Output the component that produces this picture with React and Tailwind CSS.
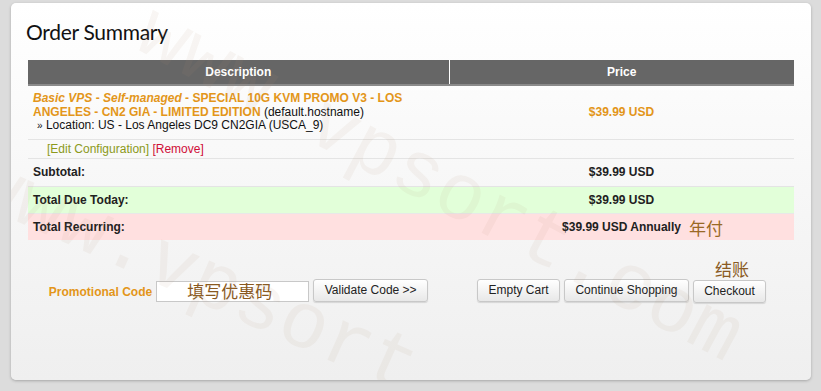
import React from 'react';

const Btn = ({ children, className = '' }) => (
    <button className={`h-[23px] px-[10px] text-[12px] text-[#222] border border-[#c8c8c8] rounded-[3px] bg-gradient-to-b from-white to-[#e8e8e8] shadow-[0_1px_1px_rgba(0,0,0,0.12)] ${className}`}>
        {children}
    </button>
);

const App = () => {
    return (
        <div className="w-[821px] h-[391px] bg-[#dcdcdc] pt-[3px] pl-[11px] overflow-hidden" style={{ fontFamily: '"Liberation Sans", Arial, sans-serif' }}>
            <div className="relative w-[800px] h-[377px] rounded-[5px] bg-gradient-to-b from-white to-[#efefef] shadow-[0_1px_3px_rgba(0,0,0,0.25)] overflow-hidden">
                <div className="pt-[15px] pl-[15px] pr-[17px]">
                    <h1 className="text-[21px] leading-[28px] text-[#111] tracking-[-0.3px]" style={{ fontFamily: 'Lato, "Open Sans", sans-serif' }}>
                        Order Summary
                    </h1>

                    <table className="mt-[14px] ml-[2px] w-[766px] border-collapse text-[12px] text-[#111]">
                        <thead>
                            <tr className="bg-[#666666] text-white h-[25px] border-b-2 border-[#8a8a8a]">
                                <th className="w-[421px] font-bold border-r border-white">Description</th>
                                <th className="font-bold">Price</th>
                            </tr>
                        </thead>
                        <tbody>
                            <tr className="border-b border-[#e4e4e4]">
                                <td className="pl-[5px] pt-[6px] pb-[6px] leading-[13.5px] align-top">
                                    <div className="pr-[40px]">
                                        <span className="text-[#e3961a] font-bold italic">Basic VPS</span>
                                        <span className="text-[#e3961a] font-bold"> - </span>
                                        <span className="text-[#e3961a] font-bold italic">Self-managed</span>
                                        <span className="text-[#e3961a] font-bold"> - SPECIAL 10G KVM PROMO V3 - LOS ANGELES - CN2 GIA - LIMITED EDITION</span>
                                        <span> (default.hostname)</span>
                                    </div>
                                    <div className="pl-[4px]">
                                        <span className="text-[10px]">»</span> Location: US - Los Angeles DC9 CN2GIA (USCA_9)
                                    </div>
                                </td>
                                <td className="text-center font-bold text-[#e3961a]">$39.99 USD</td>
                            </tr>
                            <tr className="border-b border-[#e4e4e4] h-[18px]">
                                <td className="pl-[19px]" colSpan={2}>
                                    <span className="text-[#8c9a1c]">[Edit Configuration]</span>{' '}
                                    <span className="text-[#d0103a]">[Remove]</span>
                                </td>
                            </tr>
                            <tr className="border-b border-[#e4e4e4] h-[28px] font-bold text-[#222]">
                                <td className="pl-[5px]">Subtotal:</td>
                                <td className="text-center">$39.99 USD</td>
                            </tr>
                            <tr className="bg-[#e2ffd9] border-b border-[#e8e8e8] h-[27px] font-bold text-[#222]">
                                <td className="pl-[5px]">Total Due Today:</td>
                                <td className="text-center">$39.99 USD</td>
                            </tr>
                            <tr className="bg-[#ffe0e0] h-[27px] font-bold text-[#222]">
                                <td className="pl-[5px]">Total Recurring:</td>
                                <td className="text-center">
                                    <span className="relative">
                                        $39.99 USD Annually
                                        <span className="absolute left-[calc(100%+8px)] top-[-5px] text-[17px] font-normal text-[#9a6a26] whitespace-nowrap" style={{ fontFamily: '"Noto Sans CJK SC", sans-serif' }}>年付</span>
                                    </span>
                                </td>
                            </tr>
                        </tbody>
                    </table>

                    <div className="ml-[2px] w-[766px] flex mt-[38px]">
                        <div className="w-[421px] flex items-center justify-center gap-[4px]">
                            <span className="text-[12px] font-bold text-[#e3961a] mt-[4px]">Promotional Code</span>
                            <div className="relative w-[153px] h-[21px] bg-white border border-[#c8c8c8] mt-[2px]">
                                <span className="absolute left-[30px] top-[-4px] text-[17px] text-[#8a5a22] whitespace-nowrap" style={{ fontFamily: '"Noto Sans CJK SC", sans-serif' }}>填写优惠码</span>
                            </div>
                            <Btn className="w-[115px]">Validate Code &gt;&gt;</Btn>
                        </div>
                        <div className="flex-1 flex items-center justify-center gap-[4px]">
                            <Btn className="w-[83px]">Empty Cart</Btn>
                            <Btn className="w-[125px]">Continue Shopping</Btn>
                            <div className="relative">
                                <span className="absolute left-[22px] top-[-22px] text-[17px] text-[#8a5a22] whitespace-nowrap" style={{ fontFamily: '"Noto Sans CJK SC", sans-serif' }}>结账</span>
                                <Btn className="w-[73px]">Checkout</Btn>
                            </div>
                        </div>
                    </div>
                </div>

                <div className="pointer-events-none absolute left-[150px] top-[-10px] rotate-[28deg] origin-top-left text-[80px] leading-none text-[#b09070] opacity-[0.08] whitespace-nowrap" style={{ fontFamily: '"Liberation Mono", monospace' }}>
                    www.vpsort.com
                </div>
                <div className="pointer-events-none absolute left-[-20px] top-[140px] rotate-[24deg] origin-top-left text-[80px] leading-none text-[#b09070] opacity-[0.08] whitespace-nowrap" style={{ fontFamily: '"Liberation Mono", monospace' }}>
                    www.vpsort.com
                </div>
            </div>
        </div>
    );
};

export default App;
